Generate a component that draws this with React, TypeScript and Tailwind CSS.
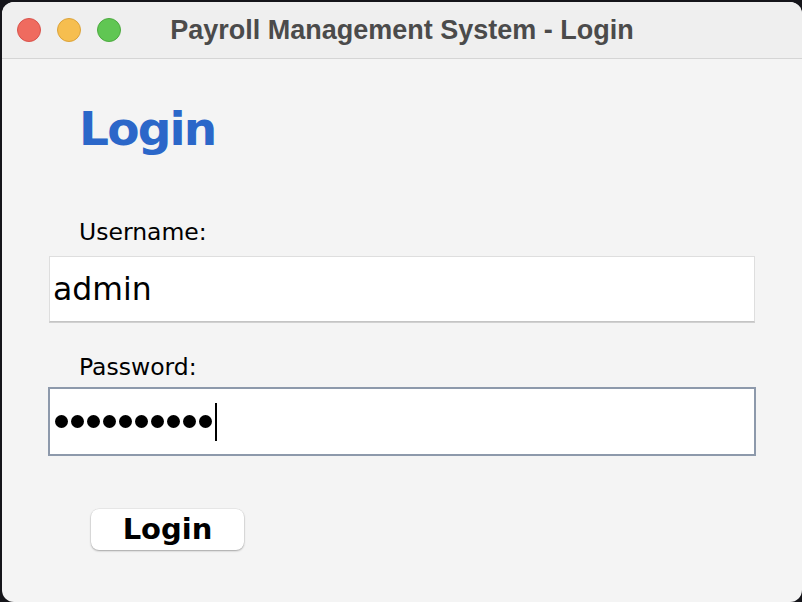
import { useState } from 'react'

const ui = { fontFamily: '"DejaVu Sans", "Open Sans", sans-serif' }

export default function App() {
  const [user, setUser] = useState('admin')
  const passLength = 10

  return (
    <div className="h-[602px] w-[802px] overflow-hidden bg-[#15151a] pl-[2px] pt-[2px]">
      <div className="flex h-[600px] w-[800px] flex-col overflow-hidden rounded-[12px] bg-[#f4f4f4]">
        {/* title bar */}
        <div className="relative flex h-[57px] shrink-0 items-center border-b border-[#d5d5d5] bg-[#efefef]">
          <div className="flex items-center gap-[16px] pl-[15px]">
            <span className="h-[24px] w-[24px] rounded-full border border-[#d9534c] bg-[#ef6b5f]" />
            <span className="h-[24px] w-[24px] rounded-full border border-[#dca33a] bg-[#f6be4f]" />
            <span className="h-[24px] w-[24px] rounded-full border border-[#4daa3f] bg-[#60c653]" />
          </div>
          <div
            className="absolute inset-x-0 top-0 flex h-full items-center justify-center text-[27px] font-bold text-[#4b4b4b]"
            style={{ fontFamily: '"Liberation Sans", Arial, sans-serif' }}
          >
            Payroll Management System - Login
          </div>
        </div>

        {/* body */}
        <div className="flex flex-col pl-[46px] pr-[44px]" style={ui}>
          <h1 className="mt-[40px] pl-[31px] text-[47px] leading-[60px] font-bold tracking-[-1.8px] text-[#2b67c9]">
            Login
          </h1>

          <label className="mt-[58px] pl-[31px] text-[23.5px] leading-[30px] text-black">Username:</label>
          <input
            value={user}
            onChange={(e) => setUser(e.target.value)}
            className="ml-[1px] mt-[9px] h-[66px] w-[706px] border border-[#dedede] border-b-[#c4c4c4] bg-white pl-[3px] text-[31.5px] text-black outline-none shadow-[0_1px_0_#d0d0d0]"
          />

          <label className="mt-[30px] pl-[31px] text-[23.5px] leading-[30px] text-black">Password:</label>
          <div
            aria-label="password"
            className="mt-[5px] flex h-[69px] w-[708px] items-center border-2 border-[#8d99ab] bg-white pl-[5px]"
          >
            <div className="flex items-center gap-[3px]">
              {Array.from({ length: passLength }).map((_, i) => (
                <span key={i} className="h-[13px] w-[13px] rounded-full bg-black" />
              ))}
            </div>
            <span className="ml-[3px] h-[38px] w-[2px] bg-black" />
          </div>

          <div className="mt-[53px] pl-[43px]">
            <button className="flex h-[41px] w-[153px] items-center justify-center rounded-[8px] bg-white text-[29px] font-bold text-black shadow-[0_1px_2px_rgba(0,0,0,0.3),0_0_0_0.5px_rgba(0,0,0,0.08)]">
              Login
            </button>
          </div>
        </div>
      </div>
    </div>
  )
}
